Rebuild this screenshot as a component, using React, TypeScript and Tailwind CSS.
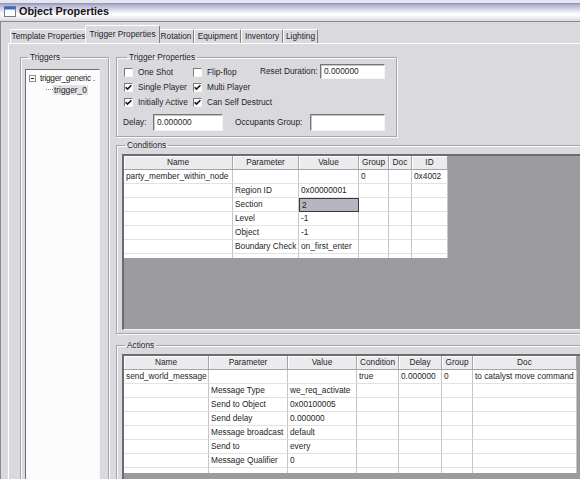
import React from 'react';

type Col = { label: string; w: string };

const condCols: Col[] = [
  { label: 'Name', w: 'w-[109px]' },
  { label: 'Parameter', w: 'w-[66px]' },
  { label: 'Value', w: 'w-[60px]' },
  { label: 'Group', w: 'w-[30px]' },
  { label: 'Doc', w: 'w-[23px]' },
  { label: 'ID', w: 'w-[36px]' },
];

const condRows = [
  ['party_member_within_node', '', '', '0', '', '0x4002'],
  ['', 'Region ID', '0x00000001', '', '', ''],
  ['', 'Section', '2', '', '', ''],
  ['', 'Level', '-1', '', '', ''],
  ['', 'Object', '-1', '', '', ''],
  ['', 'Boundary Check', 'on_first_enter', '', '', ''],
];

const actCols: Col[] = [
  { label: 'Name', w: 'w-[85px]' },
  { label: 'Parameter', w: 'w-[79px]' },
  { label: 'Value', w: 'w-[69px]' },
  { label: 'Condition', w: 'w-[42px]' },
  { label: 'Delay', w: 'w-[43px]' },
  { label: 'Group', w: 'w-[31px]' },
  { label: 'Doc', w: 'w-[104px]' },
];

const actRows = [
  ['send_world_message', '', '', 'true', '0.000000', '0', 'to catalyst move command'],
  ['', 'Message Type', 'we_req_activate', '', '', '', ''],
  ['', 'Send to Object', '0x00100005', '', '', '', ''],
  ['', 'Send delay', '0.000000', '', '', '', ''],
  ['', 'Message broadcast', 'default', '', '', '', ''],
  ['', 'Send to', 'every', '', '', '', ''],
  ['', 'Message Qualifier', '0', '', '', '', ''],
];

const tabs = [
  { label: 'Template Properties', w: 'w-[77px]' },
  { label: 'Trigger Properties', w: 'w-[75px]' },
  { label: 'Rotation', w: 'w-[36px]' },
  { label: 'Equipment', w: 'w-[47px]' },
  { label: 'Inventory', w: 'w-[42px]' },
  { label: 'Lighting', w: 'w-[35px]' },
];

function Check({ on }: { on?: boolean }) {
  return (
    <span className="w-[9px] h-[9px] flex-none flex items-center justify-center bg-white border border-t-[#7a7a7e] border-l-[#7a7a7e] border-r-[#f6f6f8] border-b-[#f6f6f8]">
      {on && (
        <svg width="7" height="7" viewBox="0 0 7 7">
          <path d="M0.6 3.2 L2.5 5.1 L6.4 1.2" stroke="#161616" strokeWidth="1.6" fill="none" />
        </svg>
      )}
    </span>
  );
}

function CheckRow({ label, on }: { label: string; on?: boolean }) {
  return (
    <div className="h-[15px] flex items-center gap-[5px]">
      <Check on={on} />
      <span>{label}</span>
    </div>
  );
}

function TextBox({ value, className }: { value?: string; className: string }) {
  return (
    <div
      className={`bg-white border border-t-[#76767a] border-l-[#76767a] border-r-[#f4f4f6] border-b-[#f4f4f6] shadow-[inset_1px_1px_0_#c4c4c8] px-[3px] flex items-center ${className}`}
    >
      {value}
    </div>
  );
}

function Group({ label, className, children }: { label: string; className: string; children: React.ReactNode }) {
  return (
    <fieldset className={`border border-[#a6a6aa] shadow-[1px_1px_0_#fafafa,inset_1px_1px_0_#fafafa] ${className}`}>
      <legend className="ml-[3px] px-[2px] leading-[10px]">{label}</legend>
      {children}
    </fieldset>
  );
}

function Grid({
  cols,
  rows,
  sel,
  className,
  tail,
}: {
  cols: Col[];
  rows: string[][];
  sel?: [number, number];
  className: string;
  tail: string;
}) {
  return (
    <div className={`bg-[#9c9ca0] border-t-2 border-l-2 border-t-[#6c6c70] border-l-[#6c6c70] border-b border-b-[#f4f4f6] overflow-hidden ${className}`}>
      <div className="flex">
        {cols.map((c) => (
          <div
            key={c.label}
            className={`${c.w} h-[14px] flex-none flex items-center justify-center bg-[#ebebed] border-r border-b border-[#a4a4a8] shadow-[inset_1px_1px_0_#ffffff]`}
          >
            {c.label}
          </div>
        ))}
      </div>
      {rows.map((r, i) => (
        <div key={i} className="flex">
          {r.map((v, j) => {
            const isSel = sel && sel[0] === i && sel[1] === j;
            return (
              <div
                key={j}
                className={`${cols[j].w} h-[14px] flex-none px-[2px] leading-[13px] whitespace-nowrap overflow-hidden ${
                  isSel
                    ? 'bg-[#b6b6c2] border border-[#3a3a3e]'
                    : 'bg-white border-r border-b border-r-[#c6c6ca] border-b-[#e2e2e4]'
                }`}
              >
                {v}
              </div>
            );
          })}
        </div>
      ))}
      <div className="flex">
        {cols.map((c) => (
          <div key={c.label} className={`${c.w} ${tail} flex-none bg-white border-r border-[#c6c6ca]`} />
        ))}
      </div>
    </div>
  );
}

export default function App() {
  return (
    <div className="w-[580px] h-[479px] overflow-hidden flex flex-col bg-[#dadade] text-[8.3px] text-[#1e1e1e] font-['Liberation_Sans',Arial,sans-serif]">
      {/* title bar */}
      <div className="h-[21px] flex-none flex items-center gap-[3px] pl-[4px] pt-[2px] bg-[linear-gradient(to_bottom,#e6e6f0_0px,#e6e6f0_3px,#9898b6_3px,#9898b6_4px,#b2b2d2_5px,#ffffff_14px,#f2f2f4_17px,#dadade_21px)]">
        <svg width="12" height="11" viewBox="0 0 12 11" className="flex-none">
          <rect x="0.5" y="0.5" width="11" height="10" fill="#ffffff" stroke="#6a7a98" />
          <rect x="1" y="1" width="10" height="2.5" fill="#2e6ad0" />
        </svg>
        <span className="font-bold text-[10.8px] text-[#141414]">Object Properties</span>
      </div>
      <div className="flex-1 flex flex-col border-t border-[#8a8a8e] border-l border-l-[#8c8c90]">
        {/* tabs */}
        <div className="h-[21px] flex-none flex items-end pl-[9px]">
          {tabs.map((t) => {
            const active = t.label === 'Trigger Properties';
            return (
              <div
                key={t.label}
                className={`${t.w} flex-none whitespace-nowrap justify-center ${
                  active
                    ? 'h-[18px] -mx-[2px] relative z-10 flex items-center bg-[#dadade] border-t border-l border-white border-r border-r-[#7c7c80] rounded-t-[2px]'
                    : 'h-[14px] flex items-center border-t border-l border-white border-r border-r-[#808084] rounded-t-[2px]'
                }`}
              >
                {t.label}
              </div>
            );
          })}
        </div>
        {/* tab panel */}
        <div className="flex-1 ml-[7px] border-t border-l border-white flex items-start pt-[8px] pl-[11px] gap-[7px]">
          <Group label="Triggers" className="w-[89px] h-[440px] flex-none pl-[4px] pt-[7px]">
            <div className="w-[75px] h-[420px] bg-[#fcfcfc] border border-t-[#6e6e72] border-l-[#6e6e72] border-r-[#f4f4f6] border-b-[#f4f4f6] pt-[3px] pl-[3px]">
              <div className="h-[11px] flex items-center gap-[4px]">
                <span className="w-[7px] h-[7px] flex-none flex items-center justify-center bg-white border border-[#909094]">
                  <span className="w-[3px] h-px bg-[#202020]" />
                </span>
                <span className="whitespace-nowrap tracking-[-0.3px]">trigger_generic .</span>
              </div>
              <div className="h-[11px] flex items-center pl-[17px]">
                <span className="w-[7px] border-t border-dotted border-[#808084]" />
                <span className="px-[1px] bg-[#e2e2e6] leading-[10px]">trigger_0</span>
              </div>
            </div>
          </Group>
          <div className="flex-none w-[480px] flex flex-col">
            <Group label="Trigger Properties" className="w-[281px] pl-[7px] pt-[3px] pb-[5px]">
              <div className="flex">
                <div className="w-[69px] flex flex-col">
                  <CheckRow label="One Shot" />
                  <CheckRow label="Single Player" on />
                  <CheckRow label="Initially Active" on />
                </div>
                <div className="w-[67px] flex flex-col whitespace-nowrap">
                  <CheckRow label="Flip-flop" />
                  <CheckRow label="Multi Player" on />
                  <CheckRow label="Can Self Destruct" on />
                </div>
                <div className="flex items-center h-[15px] -mt-px">
                  <span className="w-[60px] whitespace-nowrap">Reset Duration:</span>
                  <TextBox value="0.000000" className="w-[65px] h-[15px]" />
                </div>
              </div>
              <div className="flex items-center mt-[4px] -ml-px">
                <span className="w-[30px]">Delay:</span>
                <TextBox value="0.000000" className="w-[70px] h-[17px]" />
                <span className="ml-[12px] w-[75px]">Occupants Group:</span>
                <TextBox className="w-[75px] h-[17px]" />
              </div>
            </Group>
            <Group label="Conditions" className="mt-[3px] w-[480px] pl-[5px] pt-[4px] pb-[3px]">
              <Grid cols={condCols} rows={condRows} sel={[2, 2]} className="h-[176px]" tail="h-[4px]" />
            </Group>
            <Group label="Actions" className="mt-[6px] w-[480px] h-[160px] pl-[5px] pt-[4px]">
              <Grid cols={actCols} rows={actRows} className="h-[160px]" tail="h-[5px]" />
            </Group>
          </div>
        </div>
      </div>
    </div>
  );
}
